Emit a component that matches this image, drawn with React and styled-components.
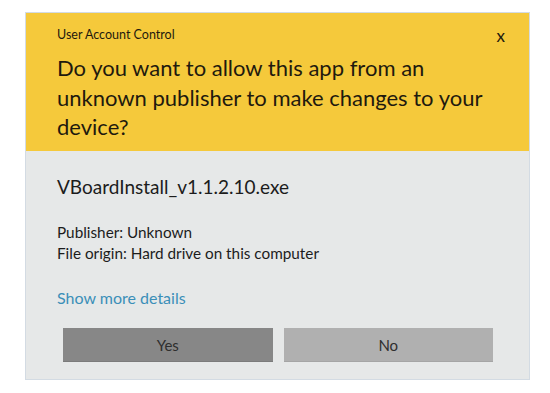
import React from "react";
import styled, { createGlobalStyle } from "styled-components";

const GlobalStyle = createGlobalStyle`
  html, body {
    margin: 0;
    padding: 0;
    background: #ffffff;
  }
  body {
    font-family: Lato, "Noto Sans", sans-serif;
  }
`;

const Page = styled.div`
  width: 550px;
  height: 393px;
  padding: 12px 0 0 25px;
  box-sizing: border-box;
`;

const Dialog = styled.div`
  width: 505px;
  height: 368px;
  box-sizing: border-box;
  border: 1px solid #d3dbe3;
  background: #e6e8e8;
  display: flex;
  flex-direction: column;
`;

const Header = styled.div`
  background: #f5c93b;
  height: 138px;
  box-sizing: border-box;
  padding: 11px 24px 0 31px;
  color: #1f1a0e;
`;

const TopRow = styled.div`
  display: flex;
  justify-content: space-between;
  align-items: center;
  height: 20px;
`;

const Caption = styled.span`
  font-size: 12.5px;
`;

const Close = styled.span`
  font-size: 17px;
  margin-top: 3px;
`;

const Question = styled.h1`
  margin: 9px 0 0;
  font-size: 22px;
  font-weight: 400;
  line-height: 29.5px;
`;

const Body = styled.div`
  padding: 23px 36px 0 31px;
  color: #1c1c1c;
  display: flex;
  flex-direction: column;
`;

const FileName = styled.div`
  font-size: 19px;
  line-height: 26px;
`;

const Details = styled.div`
  margin-top: 22px;
  font-size: 15.3px;
  line-height: 21px;
`;

const MoreLink = styled.a`
  margin-top: 23px;
  font-size: 16px;
  line-height: 21px;
  color: #3b8fb8;
  text-decoration: none;
  cursor: pointer;
`;

const Buttons = styled.div`
  display: grid;
  grid-template-columns: 1fr 1fr;
  gap: 11px;
  margin: 20px 0 0 6px;
`;

const Button = styled.button`
  height: 34px;
  border: none;
  border-bottom: 1px solid ${(p) => (p.$primary ? "#7b7b7b" : "#a5a5a5")};
  background: ${(p) => (p.$primary ? "#878787" : "#b0b0b0")};
  color: #2e2e2e;
  font-family: inherit;
  font-size: 15px;
  cursor: pointer;
`;

export default function App() {
  return (
    <>
      <GlobalStyle />
      <Page>
        <Dialog>
          <Header>
            <TopRow>
              <Caption>User Account Control</Caption>
              <Close>x</Close>
            </TopRow>
            <Question>
              Do you want to allow this app from an unknown publisher to make
              changes to your device?
            </Question>
          </Header>
          <Body>
            <FileName>VBoardInstall_v1.1.2.10.exe</FileName>
            <Details>
              Publisher: Unknown
              <br />
              File origin: Hard drive on this computer
            </Details>
            <MoreLink>Show more details</MoreLink>
            <Buttons>
              <Button $primary>Yes</Button>
              <Button>No</Button>
            </Buttons>
          </Body>
        </Dialog>
      </Page>
    </>
  );
}
